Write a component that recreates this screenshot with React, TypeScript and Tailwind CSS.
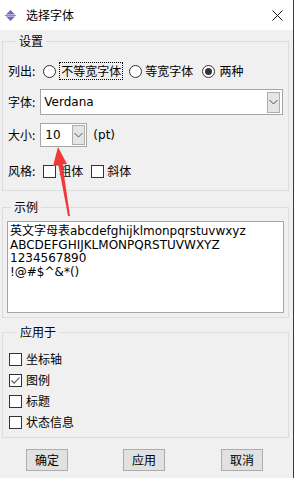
import React from 'react';

const cjk = "font-['Noto_Sans_CJK_SC','Noto_Sans',sans-serif]";

const Radio = ({ checked }: { checked?: boolean }) => (
  <span className="flex h-[13px] w-[13px] items-center justify-center rounded-full border border-[#333] bg-white">
    {checked && <span className="h-[7px] w-[7px] rounded-full bg-[#333]" />}
  </span>
);

const Check = ({ checked }: { checked?: boolean }) => (
  <span className="flex h-[13px] w-[13px] items-center justify-center border border-[#333] bg-white">
    {checked && (
      <svg width="11" height="11" viewBox="0 0 11 11">
        <path d="M1.5 5.5 L4.2 8.2 L9.5 2.5" fill="none" stroke="#555" strokeWidth="1.1" />
      </svg>
    )}
  </span>
);

const DropBtn = ({ h }: { h: string }) => (
  <span className={`flex w-[13px] ${h} items-center justify-center border border-[#adadad] bg-[#e5e5e5]`}>
    <svg width="9" height="6" viewBox="0 0 9 6">
      <path d="M0.5 1 L4.5 5 L8.5 1" fill="none" stroke="#555" strokeWidth="1" />
    </svg>
  </span>
);

const Btn = ({ label }: { label: string }) => (
  <button className="h-[22px] w-[42px] border border-[#adadad] bg-[#e1e1e1] text-[12px] leading-none text-black">
    {label}
  </button>
);

export default function App() {
  return (
    <div className={`relative h-[478px] w-[294px] overflow-hidden border-r border-[#5c2b2b] bg-[#f0f0f0] text-[12px] text-black ${cjk}`}>
      {/* title bar */}
      <div className="flex h-[30px] items-center bg-white">
        <svg className="ml-[5px]" width="11" height="11" viewBox="0 0 11 11">
          <path d="M5.5 0 L10 4.6 L1 4.6 Z" fill="#6b6bb8" />
          <path d="M5.5 11 L10 6.4 L1 6.4 Z" fill="#6b6bb8" />
          <rect x="0" y="4.9" width="11" height="1.2" fill="#8a8ac8" />
        </svg>
        <span className="ml-[10px] text-[12px] leading-none">选择字体</span>
        <svg className="ml-auto mr-[10px]" width="11" height="11" viewBox="0 0 11 11">
          <path d="M0.5 0.5 L10.5 10.5 M10.5 0.5 L0.5 10.5" stroke="#111" strokeWidth="1" />
        </svg>
      </div>

      {/* 设置 */}
      <fieldset className="ml-[2px] mt-[3px] w-[287px] border border-[#dcdcdc] px-[5px] pb-[10px]">
        <legend className="ml-[8px] px-[3px] leading-[16px]">设置</legend>
        <div className="mt-[13px] flex h-[18px] items-center">
          <span>列出:</span>
          <span className="ml-[8px]"><Radio /></span>
          <span className="ml-[3px] border border-dotted border-black px-[1px] leading-[16px]">不等宽字体</span>
          <span className="ml-[6px]"><Radio /></span>
          <span className="ml-[3px]">等宽字体</span>
          <span className="ml-[9px]"><Radio checked /></span>
          <span className="ml-[4px]">两种</span>
        </div>
        <div className="mt-[9px] flex h-[26px] items-center">
          <span>字体:</span>
          <div className="ml-[5px] flex h-[26px] flex-1 items-center border border-[#a6a6a6] bg-white pl-[3px] pr-[2px]">
            <span className="font-['DejaVu_Sans',sans-serif] text-[12px]">Verdana</span>
            <span className="ml-auto"><DropBtn h="h-[21px]" /></span>
          </div>
        </div>
        <div className="mt-[8px] flex h-[24px] items-center">
          <span>大小:</span>
          <div className="ml-[5px] flex h-[24px] w-[47px] items-center border border-[#a6a6a6] bg-white pl-[4px] pr-[1px]">
            <span className="font-['DejaVu_Sans',sans-serif] text-[12px]">10</span>
            <span className="ml-auto"><DropBtn h="h-[20px]" /></span>
          </div>
          <span className="ml-[6px] font-['DejaVu_Sans',sans-serif]">(pt)</span>
        </div>
        <div className="mt-[15px] flex h-[18px] items-center">
          <span>风格:</span>
          <span className="ml-[8px]"><Check /></span>
          <span className="ml-[3px]">粗体</span>
          <span className="ml-[8px]"><Check /></span>
          <span className="ml-[3px]">斜体</span>
        </div>
      </fieldset>

      {/* 示例 */}
      <fieldset className="ml-[2px] mt-[8px] w-[287px] border border-[#dcdcdc] pb-[4px]">
        <legend className="ml-[8px] px-[3px] leading-[16px]">示例</legend>
        <div className="ml-[4px] mt-[6px] h-[92px] w-[277px] border border-[#a6a6a6] bg-white px-[2px] pt-[3px] font-['DejaVu_Sans','Noto_Sans_CJK_SC',sans-serif] text-[12px] leading-[13.5px]">
          <div>英文字母表abcdefghijklmonpqrstuvwxyz</div>
          <div>ABCDEFGHIJKLMONPQRSTUVWXYZ</div>
          <div>1234567890</div>
          <div>!@#$^&amp;*()</div>
        </div>
      </fieldset>

      {/* 应用于 */}
      <fieldset className="ml-[2px] mt-[6px] w-[287px] border border-[#dcdcdc] pb-[6px] pl-[6px]">
        <legend className="ml-[8px] px-[3px] leading-[16px]">应用于</legend>
        <div className="mt-[10px] flex flex-col gap-[3px]">
          {[
            ['坐标轴', false],
            ['图例', true],
            ['标题', false],
            ['状态信息', false],
          ].map(([label, on]) => (
            <div key={label as string} className="flex h-[18px] items-center">
              <Check checked={on as boolean} />
              <span className="ml-[4px]">{label as string}</span>
            </div>
          ))}
        </div>
      </fieldset>

      {/* buttons */}
      <div className="mt-[11px] flex pl-[26px]">
        <Btn label="确定" />
        <span className="ml-[55px]"><Btn label="应用" /></span>
        <span className="ml-[56px]"><Btn label="取消" /></span>
      </div>

      {/* red annotation arrow */}
      <svg className="pointer-events-none absolute left-0 top-0" width="294" height="478">
        <polygon points="58,147 67,164 62.5,164.5 70,216 68,216 58.5,165.5 53,166" fill="#f03a3a" />
      </svg>
    </div>
  );
}
